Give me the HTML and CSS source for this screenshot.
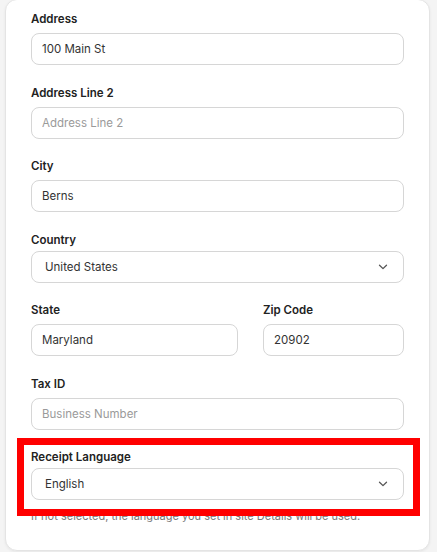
FILE: index.html
```html
<!DOCTYPE html>
<html lang="en">
<head>
  <meta charset="UTF-8" />
  <meta name="viewport" content="width=device-width, initial-scale=1.0"/>
  <title>Billing Address</title>
  <link rel="stylesheet" href="styles.css">
</head>
<body>

  <div class="card">
    <div class="field">
      <label class="label">Address</label>
      <input class="input" type="text" value="100 Main St">
    </div>

    <div class="field">
      <label class="label">Address Line 2</label>
      <input class="input" type="text" placeholder="Address Line 2">
    </div>

    <div class="field">
      <label class="label">City</label>
      <input class="input" type="text" value="Berns">
    </div>

    <div class="field field-select">
      <label class="label">Country</label>
      <div class="select">
        <span>United States</span>
        <svg class="chevron" viewBox="0 0 10 6" width="10" height="6"><path d="M1.5 1.2 5 4.6 8.5 1.2" /></svg>
      </div>
    </div>

    <div class="row">
      <div class="field grow">
        <label class="label">State</label>
        <input class="input" type="text" value="Maryland">
      </div>
      <div class="field zip">
        <label class="label">Zip Code</label>
        <input class="input" type="text" value="20902">
      </div>
    </div>

    <div class="field">
      <label class="label">Tax ID</label>
      <input class="input" type="text" placeholder="Business Number">
    </div>

    <div class="field field-select last">
      <label class="label">Receipt Language</label>
      <div class="select">
        <span>English</span>
        <svg class="chevron" viewBox="0 0 10 6" width="10" height="6"><path d="M1.5 1.2 5 4.6 8.5 1.2" /></svg>
      </div>
      <p class="hint">If not selected, the language you set in site Details will be used.</p>
    </div>
  </div>

  <div class="highlight"></div>

</body>
</html>
```

FILE: styles.css
```css
body {
  font-family: 'Inter', 'Noto Sans', sans-serif;
  background-color: #f4f4f4;
  margin: 0;
  padding: 0;
  color: #222;
}
.card {
  background-color: #ffffff;
  border: 1px solid #e4e4e4;
  border-radius: 12px;
  margin: -1px 7px 4px 5px;
  padding: 11px 25px 26px;
  box-shadow: 0 1px 3px rgba(0,0,0,0.06);
}
.field {
  display: flex;
  flex-direction: column;
  gap: 6px;
  margin-bottom: 19.5px;
}
.field-select {
  gap: 3px;
}
.field.last {
  margin-bottom: 0;
}
.label {
  font-size: 11.5px;
  font-weight: 600;
  line-height: 16px;
  color: #222;
}
.input,
.select {
  box-sizing: border-box;
  height: 32px;
  width: 100%;
  border: 1px solid #d6d6d6;
  border-radius: 8px;
  background: #fff;
  font-family: inherit;
  font-size: 11.5px;
  color: #333;
}
.input {
  padding: 0 10px;
  outline: none;
}
.input::placeholder {
  color: #9a9a9a;
}
.select {
  display: flex;
  align-items: center;
  justify-content: space-between;
  padding: 0 15px 0 13px;
}
.chevron {
  fill: none;
  stroke: #555;
  stroke-width: 1.3;
  stroke-linecap: round;
  stroke-linejoin: round;
}
.row {
  display: flex;
  gap: 25px;
}
.grow {
  flex: 1;
}
.zip {
  width: 141px;
}
.hint {
  margin: 5px 0 0;
  font-size: 11px;
  line-height: 16px;
  color: #777;
}
/* red annotation frame over the receipt language field */
.highlight {
  position: absolute;
  left: 17px;
  top: 438px;
  width: 403px;
  height: 78px;
  box-sizing: border-box;
  border: 7px solid #ff0000;
}
```
